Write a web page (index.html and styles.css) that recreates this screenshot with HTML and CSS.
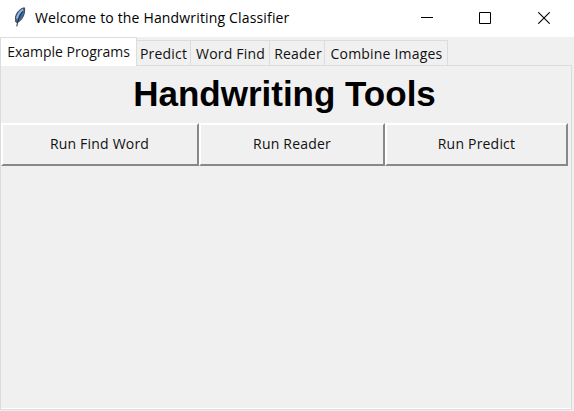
FILE: index.html
```html
<!DOCTYPE html>
<html lang="en">
<head>
<meta charset="utf-8">
<title>Welcome to the Handwriting Classifier</title>
<link rel="stylesheet" href="styles.css">
</head>
<body>
<div class="window">
  <header class="titlebar">
    <svg class="feather" width="14" height="21" viewBox="0 0 14 21">
      <path d="M11.4 .8C8.4 1 3.4 4.6 2.5 10.2L2.8 15 4.6 15.4C9.2 13.4 12.6 6.5 11.4.8Z" fill="#3f6ea3" stroke="#3c4450" stroke-width="1"/>
      <path d="M10 2.4C6.8 4.6 4.6 7.6 3.9 11.6" fill="none" stroke="#8fb8e2" stroke-width="1.8"/>
      <path d="M9.6 4.5C6.8 8.5 4.6 13 3.8 19.4" fill="none" stroke="#2c333c" stroke-width="1.1"/>
    </svg>
    <h1 class="title">Welcome to the Handwriting Classifier</h1>
    <div class="controls">
      <svg width="12" height="12" viewBox="0 0 12 12"><path d="M0 5.5H12" stroke="#000"/></svg>
      <svg width="12" height="12" viewBox="0 0 12 12"><path d="M.5.5H11.5V11.5H.5Z" fill="none" stroke="#000"/></svg>
      <svg width="12" height="12" viewBox="0 0 12 12"><path d="M.3.3 11.7 11.7M11.7.3.3 11.7" stroke="#000" stroke-width="1.1"/></svg>
    </div>
  </header>
  <nav class="tabs">
    <div class="tab active"><span>Example Programs</span></div>
    <div class="tab predict"><span>Predict</span></div>
    <div class="tab find"><span>Word Find</span></div>
    <div class="tab reader"><span>Reader</span></div>
    <div class="tab combine"><span>Combine Images</span></div>
  </nav>
  <main class="panel">
    <h2 class="heading"><span>Handwriting Tools</span></h2>
    <div class="buttons">
      <button><span>Run Find Word</span></button>
      <button><span>Run Reader</span></button>
      <button><span>Run Predict</span></button>
    </div>
  </main>
</div>
</body>
</html>
```
FILE: styles.css
```css
* { box-sizing: border-box; }
body { margin: 0; background: #f0f0f0; color: #000; font-family: "Open Sans", "Noto Sans", sans-serif; }
.window { width: 574px; height: 411px; display: flex; flex-direction: column; overflow: hidden; }
.titlebar { height: 37px; flex: none; background: #fff; display: flex; align-items: center; padding: 0 24px 0 13px; }
.feather { flex: none; margin-top: -3px; }
.title { margin: -2px 0 0 8px; font-size: 14px; font-weight: 400; line-height: 20px; letter-spacing: .16px; white-space: nowrap; }
.controls { margin: -1px 0 0 auto; display: grid; grid-template-columns: 12px 12px 12px; column-gap: 47px; }
.controls svg { display: block; }
.controls svg:first-child { margin-left: 1px; }
.tabs { height: 29px; flex: none; display: flex; align-items: flex-end; z-index: 1; }
.tab { height: 26px; padding-left: 1px; border: 1px solid #dcdcdc; border-left: 0; font-size: 14px; line-height: 25px; letter-spacing: .2px; white-space: nowrap; text-align: center; color: #111; }
.tab.active { width: 137px; height: 29px; padding-left: 0; background: #fff; border-left: 1px solid #dcdcdc; border-bottom: 0; line-height: 27px; letter-spacing: 0; }
.predict { width: 54px; padding-left: 0; }
.find { width: 79px; }
.reader { width: 55px; padding-left: 2px; }
.combine { width: 123px; }
.panel { width: 572px; height: 345px; flex: none; margin-top: -1px; border: 1px solid #dcdcdc; box-shadow: inset 0 -1px #fff; }
.heading { height: 57px; margin: 0; padding-right: 3px; text-align: center; font: bold 35px/55px "Liberation Sans", Arial, sans-serif; white-space: nowrap; }
.buttons { display: grid; grid-template-columns: 198px 186px 183px; }
button { height: 43px; padding: 0 0 1px; border: 2px solid; border-color: #fff #888 #888 #fff; background: #f0f0f0; color: #111; font: 14px/20px "Open Sans", "Noto Sans", sans-serif; letter-spacing: .2px; white-space: nowrap; }
button:first-child { padding-right: 1px; }
```
